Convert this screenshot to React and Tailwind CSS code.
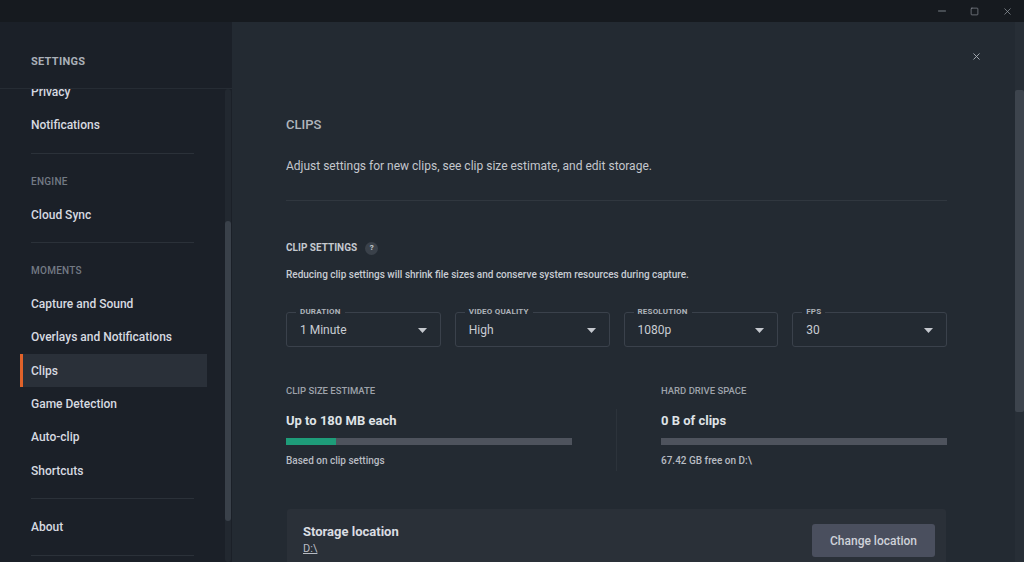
import { X, Minus, Square } from "lucide-react";

const font = { fontFamily: "Roboto, Inter, 'Noto Sans', 'Liberation Sans', sans-serif" };

const NavItem = ({ label, active }) => (
  <div
    className={`h-[33.3px] w-[187px] ml-[20px] flex items-center px-[11px] text-[12px] font-medium text-[#d7dae0] ${
      active ? "bg-[#2a3039] border-l-[3px] border-[#e0622a] pl-[8px]" : ""
    }`}
  >
    {label}
  </div>
);

const SectionHead = ({ label }) => (
  <div className="h-[33.3px] mx-[20px] flex items-center px-[11px] text-[10px] font-medium tracking-wide text-[#737a84]">
    {label}
  </div>
);

const Divider = () => (
  <div className="py-[11px] px-[31px]">
    <div className="h-px bg-[#2b3139]" />
  </div>
);

const Caret = () => (
  <svg width="9" height="5" viewBox="0 0 9 5" className="shrink-0">
    <path d="M0 0 L9 0 L4.5 5 Z" fill="#c4c8ce" />
  </svg>
);

const Select = ({ label, value }) => (
  <fieldset className="border border-[#3a414b] rounded-[3px] pl-[13px] pr-[13px] pb-[8px]">
    <legend className="-ml-[4px] px-[4px] text-[8px] leading-[10px] font-bold tracking-wide text-[#aeb3ba]">
      {label}
    </legend>
    <div className="pt-[5px] flex items-center justify-between">
      <span className="text-[12px] leading-[16px] text-[#c9cdd3]">{value}</span>
      <Caret />
    </div>
  </fieldset>
);

export default function App() {
  return (
    <div style={font} className="w-[1024px] h-[562px] flex flex-col overflow-hidden bg-[#232a32]">
      {/* title bar */}
      <div className="h-[22px] bg-[#161a1f] flex items-center justify-end text-[#9aa0a8] shrink-0">
        <div className="w-[33px] flex justify-center">
          <Minus size={12} strokeWidth={1.5} />
        </div>
        <div className="w-[33px] flex justify-center">
          <Square size={9} strokeWidth={1.6} />
        </div>
        <div className="w-[33px] flex justify-center">
          <X size={11} strokeWidth={1.5} />
        </div>
      </div>

      <div className="flex flex-1 min-h-0">
        {/* sidebar */}
        <aside className="w-[232px] bg-[#1b2028] flex flex-col shrink-0">
          <div className="h-[66px] flex items-start pt-[32px] pl-[31px] text-[11px] font-bold tracking-wide text-[#aab0b8]">
            SETTINGS
          </div>
          <div className="flex flex-1 min-h-0 border-t border-[#262c34]">
            <div className="flex-1 overflow-hidden">
              <div className="-mt-[14px]">
                <NavItem label="Privacy" />
                <NavItem label="Notifications" />
                <Divider />
                <SectionHead label="ENGINE" />
                <NavItem label="Cloud Sync" />
                <Divider />
                <SectionHead label="MOMENTS" />
                <NavItem label="Capture and Sound" />
                <NavItem label="Overlays and Notifications" />
                <NavItem label="Clips" active />
                <NavItem label="Game Detection" />
                <NavItem label="Auto-clip" />
                <NavItem label="Shortcuts" />
                <Divider />
                <NavItem label="About" />
                <Divider />
              </div>
            </div>
            <div className="w-[6px] mr-[1px] bg-[#222830] rounded-full flex flex-col">
              <div className="mt-[132px] h-[300px] bg-[#3a414a] rounded-full" />
            </div>
          </div>
        </aside>

        {/* main */}
        <main className="flex-1 flex min-w-0">
          <div className="flex-1 flex flex-col pl-[54px] pr-[63px] min-w-0">
            <div className="flex justify-end pt-[26px] -mr-[37px]">
              <button className="w-[16px] h-[16px] flex items-center justify-center text-[#aab0b8]">
                <X size={11} strokeWidth={2} />
              </button>
            </div>

            <h1 className="mt-[53px] text-[13px] leading-[16px] font-medium text-[#b1b6bd]">CLIPS</h1>
            <p className="mt-[25px] text-[12px] leading-[16px] text-[#c3c7cd]">
              Adjust settings for new clips, see clip size estimate, and edit storage.
            </p>
            <div className="mt-[26px] h-px shrink-0 bg-[#30373f]" />

            <div className="mt-[40px] flex items-center gap-[8px]">
              <span className="text-[10px] leading-[14px] font-bold text-[#c5c9cf]">CLIP SETTINGS</span>
              <span className="w-[13px] h-[13px] rounded-full bg-[#3a414a] flex items-center justify-center text-[8px] font-bold text-[#c9cdd3]">
                ?
              </span>
            </div>
            <p className="mt-[13px] text-[10px] leading-[14px] font-medium text-[#c8ccd2]">
              Reducing clip settings will shrink file sizes and conserve system resources during capture.
            </p>

            <div className="mt-[25px] grid grid-cols-4 gap-[14px]">
              <Select label="DURATION" value="1 Minute" />
              <Select label="VIDEO QUALITY" value="High" />
              <Select label="RESOLUTION" value="1080p" />
              <Select label="FPS" value="30" />
            </div>

            <div className="mt-[38px] grid grid-cols-[286px_44px_1px_44px_1fr]">
              <div className="flex flex-col">
                <span className="text-[9.5px] leading-[12px] font-medium text-[#9ea3ab]">CLIP SIZE ESTIMATE</span>
                <span className="mt-[15px] text-[13px] leading-[18px] font-bold text-[#dfe2e6]">Up to 180 MB each</span>
                <div className="mt-[8px] h-[7px] bg-[#4e535d] flex">
                  <div className="w-[50px] bg-[#1e9c79]" />
                </div>
                <span className="mt-[9px] text-[10px] leading-[14px] font-medium text-[#b8bcc3]">Based on clip settings</span>
              </div>
              <div />
              <div className="mt-[24px] h-[62px] bg-[#2c333b]" />
              <div />
              <div className="flex flex-col">
                <span className="text-[9.5px] leading-[12px] font-medium text-[#9ea3ab]">HARD DRIVE SPACE</span>
                <span className="mt-[15px] text-[13px] leading-[18px] font-bold text-[#dfe2e6]">0 B of clips</span>
                <div className="mt-[8px] h-[7px] bg-[#4e535d]" />
                <span className="mt-[9px] text-[10px] leading-[14px] font-medium text-[#b8bcc3]">67.42 GB free on D:\</span>
              </div>
            </div>

            <div className="mt-[38px] mx-[1px] bg-[#2a3038] rounded-t-[3px] flex items-start justify-between pl-[16px] pr-[11px] pt-[14px] pb-[6px]">
              <div className="flex flex-col">
                <span className="text-[13px] leading-[18px] font-bold text-[#dadde2]">Storage location</span>
                <span className="mt-[1px] text-[11px] leading-[14px] text-[#b8bcc3] underline">D:\</span>
              </div>
              <button className="w-[123px] h-[33px] mt-[1px] rounded-[3px] bg-[#4a4f5e] text-[12px] font-medium text-[#cfd2d9]">
                Change location
              </button>
            </div>
          </div>

          {/* main scrollbar */}
          <div className="w-[14px] flex justify-end shrink-0">
            <div className="w-[9px] bg-[#272e36] flex flex-col">
              <div className="mt-[68px] h-[322px] bg-[#3d444d] rounded-[2px]" />
            </div>
          </div>
        </main>
      </div>
    </div>
  );
}
